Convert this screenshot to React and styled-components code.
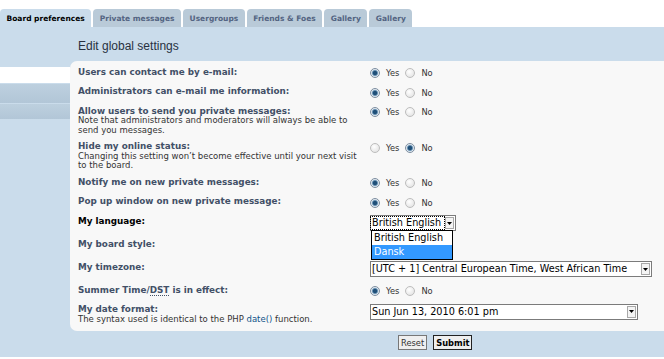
import styled, { createGlobalStyle } from "styled-components";

const GlobalStyle = createGlobalStyle`
  body {
    margin: 0;
    background: #fff;
    font-family: "DejaVu Sans", Verdana, sans-serif;
    overflow: hidden;
  }
`;

const tabs = ["Board preferences", "Private messages", "Usergroups", "Friends & Foes", "Gallery", "Gallery"];

function RadioPair({ yes }) {
  return (
    <Choices>
      <Radio $checked={yes} />
      <Choice>Yes</Choice>
      <Radio $checked={!yes} />
      <Choice>No</Choice>
    </Choices>
  );
}

function Select({ width, value, focused, children }) {
  return (
    <SelectBox $width={width}>
      <SelectText $focused={focused}>{value}</SelectText>
      <Arrow>
        <svg width="5" height="3" viewBox="0 0 5 3">
          <path d="M0 0h5L2.5 3z" fill="#000" />
        </svg>
      </Arrow>
      {children}
    </SelectBox>
  );
}

export default function App() {
  return (
    <>
      <GlobalStyle />
      <TabBar>
        {tabs.map((t, i) => (
          <Tab key={i} $active={i === 0}>
            {t}
          </Tab>
        ))}
      </TabBar>
      <Panel>
        <Nav>
          <NavItem $active />
          <NavItem $h={19} />
          <NavItem $h={15} />
        </Nav>
        <Main>
          <Heading>Edit global settings</Heading>
          <Box>
            <Row>
              <Label>
                <b>Users can contact me by e-mail:</b>
              </Label>
              <RadioPair yes />
            </Row>
            <Row>
              <Label>
                <b>Administrators can e-mail me information:</b>
              </Label>
              <RadioPair yes />
            </Row>
            <Row>
              <Label>
                <b>Allow users to send you private messages:</b>
                <br />
                Note that administrators and moderators will always be able to
                <br />
                send you messages.
              </Label>
              <RadioPair yes />
            </Row>
            <Row>
              <Label>
                <b>Hide my online status:</b>
                <br />
                Changing this setting won’t become effective until your next visit
                <br />
                to the board.
              </Label>
              <RadioPair />
            </Row>
            <Row>
              <Label>
                <b>Notify me on new private messages:</b>
              </Label>
              <RadioPair yes />
            </Row>
            <Row>
              <Label>
                <b>Pop up window on new private message:</b>
              </Label>
              <RadioPair yes />
            </Row>
            <Row>
              <Label $focused>
                <b>My language:</b>
              </Label>
              <Select width={86} value="British English" focused>
                <DropList>
                  <Option>British English</Option>
                  <Option $selected>Dansk</Option>
                </DropList>
              </Select>
            </Row>
            <Row>
              <Label>
                <b>My board style:</b>
              </Label>
              <Blank />
            </Row>
            <Row>
              <Label>
                <b>My timezone:</b>
              </Label>
              <Select width={282} value="[UTC + 1] Central European Time, West African Time" />
            </Row>
            <Row>
              <Label>
                <b>
                  Summer Time/<Abbr>DST</Abbr> is in effect:
                </b>
              </Label>
              <RadioPair yes />
            </Row>
            <Row>
              <Label>
                <b>My date format:</b>
                <br />
                The syntax used is identical to the PHP <Link>date()</Link> function.
              </Label>
              <Select width={268} value="Sun Jun 13, 2010 6:01 pm" />
            </Row>
          </Box>
          <Buttons>
            <Button>Reset</Button>
            <Button $primary>Submit</Button>
          </Buttons>
        </Main>
      </Panel>
    </>
  );
}

const TabBar = styled.div`
  display: flex;
  gap: 2px;
  padding-top: 9px;
  height: 18px;
`;

const Tab = styled.div`
  height: 18px;
  padding: 0 6.5px;
  display: flex;
  align-items: center;
  border-radius: 4px 4px 0 0;
  font-size: 7.5px;
  font-weight: bold;
  white-space: nowrap;
  background: ${({ $active }) => ($active ? "#cadceb" : "#b9cad8")};
  color: ${({ $active }) => ($active ? "#000" : "#536482")};
`;

const Panel = styled.div`
  display: flex;
  height: 330px;
  background: #cadceb;
`;

const Nav = styled.div`
  width: 70px;
  flex-shrink: 0;
  padding-top: 40px;
  display: flex;
  flex-direction: column;
  gap: 1px;
`;

const NavItem = styled.div`
  height: ${({ $active, $h }) => ($active ? 16 : $h)}px;
  background: ${({ $active }) =>
    $active ? "#fff" : "linear-gradient(to bottom, #bdd0df, #b2c6d7)"};
`;

const Main = styled.div`
  flex: 1;
  min-width: 0;
`;

const Heading = styled.h2`
  margin: 0;
  padding: 12px 0 8px 8px;
  font-family: "Liberation Sans", Arial, sans-serif;
  font-weight: normal;
  font-size: 12px;
  line-height: 14px;
  color: #28313f;
`;

const Box = styled.div`
  background: #f8f8f8;
  border-radius: 7px 0 0 7px;
  padding: 2px 0 4.5px 8px;
`;

const Row = styled.div`
  display: grid;
  grid-template-columns: 292px 1fr;
  align-items: start;
  padding: 3px 0 2.5px;
`;

const Label = styled.div`
  padding-top: 1.5px;
  font-size: 8.5px;
  line-height: 9.5px;
  white-space: nowrap;
  color: #333;

  b {
    font-size: 8.8px;
    color: ${({ $focused }) => ($focused ? "#000" : "#425067")};
  }
`;

const Abbr = styled.span`
  border-bottom: 1px dotted #425067;
`;

const Link = styled.span`
  color: #105289;
`;

const Choices = styled.div`
  height: 14px;
  display: flex;
  align-items: center;
  font-size: 8.3px;
  color: #333;
`;

const Radio = styled.span`
  width: 8px;
  height: 8px;
  border-radius: 50%;
  border: 1px solid ${({ $checked }) => ($checked ? "#7d8ea0" : "#bdbdbd")};
  background: ${({ $checked }) =>
    $checked
      ? "radial-gradient(circle, #1f4f78 0 1.8px, #6f97b8 2.6px, #e4ebf1 3.6px)"
      : "radial-gradient(circle at 40% 35%, #fff, #dedede)"};
  margin-right: 6px;
`;

const Choice = styled.span`
  margin-right: 6px;
`;

const SelectBox = styled.div`
  position: relative;
  width: ${({ $width }) => $width}px;
  height: 16px;
  margin-bottom: 1.5px;
  box-sizing: border-box;
  border: 1px solid #7b7b7b;
  background: #fff;
  display: flex;
  align-items: center;
  font-size: 9.7px;
  color: #000;
`;

const SelectText = styled.span`
  flex: 1;
  padding-left: 1px;
  white-space: nowrap;
  overflow: hidden;
  line-height: 12px;
  outline: ${({ $focused }) => ($focused ? "1px dotted #000" : "none")};
  margin-right: 1px;
`;

const Arrow = styled.span`
  width: 9px;
  height: 12px;
  margin-right: 1px;
  flex-shrink: 0;
  box-sizing: border-box;
  border: 1px solid #a8a8a8;
  background: #f4f4f4;
  display: flex;
  align-items: center;
  justify-content: center;
`;

const DropList = styled.div`
  position: absolute;
  top: 14px;
  left: 0;
  width: 82px;
  box-sizing: border-box;
  border: 1px solid #000;
  background: #fff;
  z-index: 2;
`;

const Option = styled.div`
  height: 14px;
  line-height: 14px;
  padding-left: 2px;
  white-space: nowrap;
  background: ${({ $selected }) => ($selected ? "#3399ff" : "#fff")};
  color: ${({ $selected }) => ($selected ? "#fff" : "#000")};
`;

const Blank = styled.div`
  height: 17.5px;
`;

const Buttons = styled.div`
  display: flex;
  gap: 6px;
  padding: 4px 0 0 328px;
`;

const Button = styled.button`
  height: 15px;
  padding: 0 2px;
  box-sizing: border-box;
  border: 1px solid ${({ $primary }) => ($primary ? "#222" : "#777")};
  background: #efefef;
  font-family: "DejaVu Sans", Verdana, sans-serif;
  font-size: 8.3px;
  font-weight: ${({ $primary }) => ($primary ? "bold" : "normal")};
  color: ${({ $primary }) => ($primary ? "#000" : "#333")};
  cursor: pointer;
`;
